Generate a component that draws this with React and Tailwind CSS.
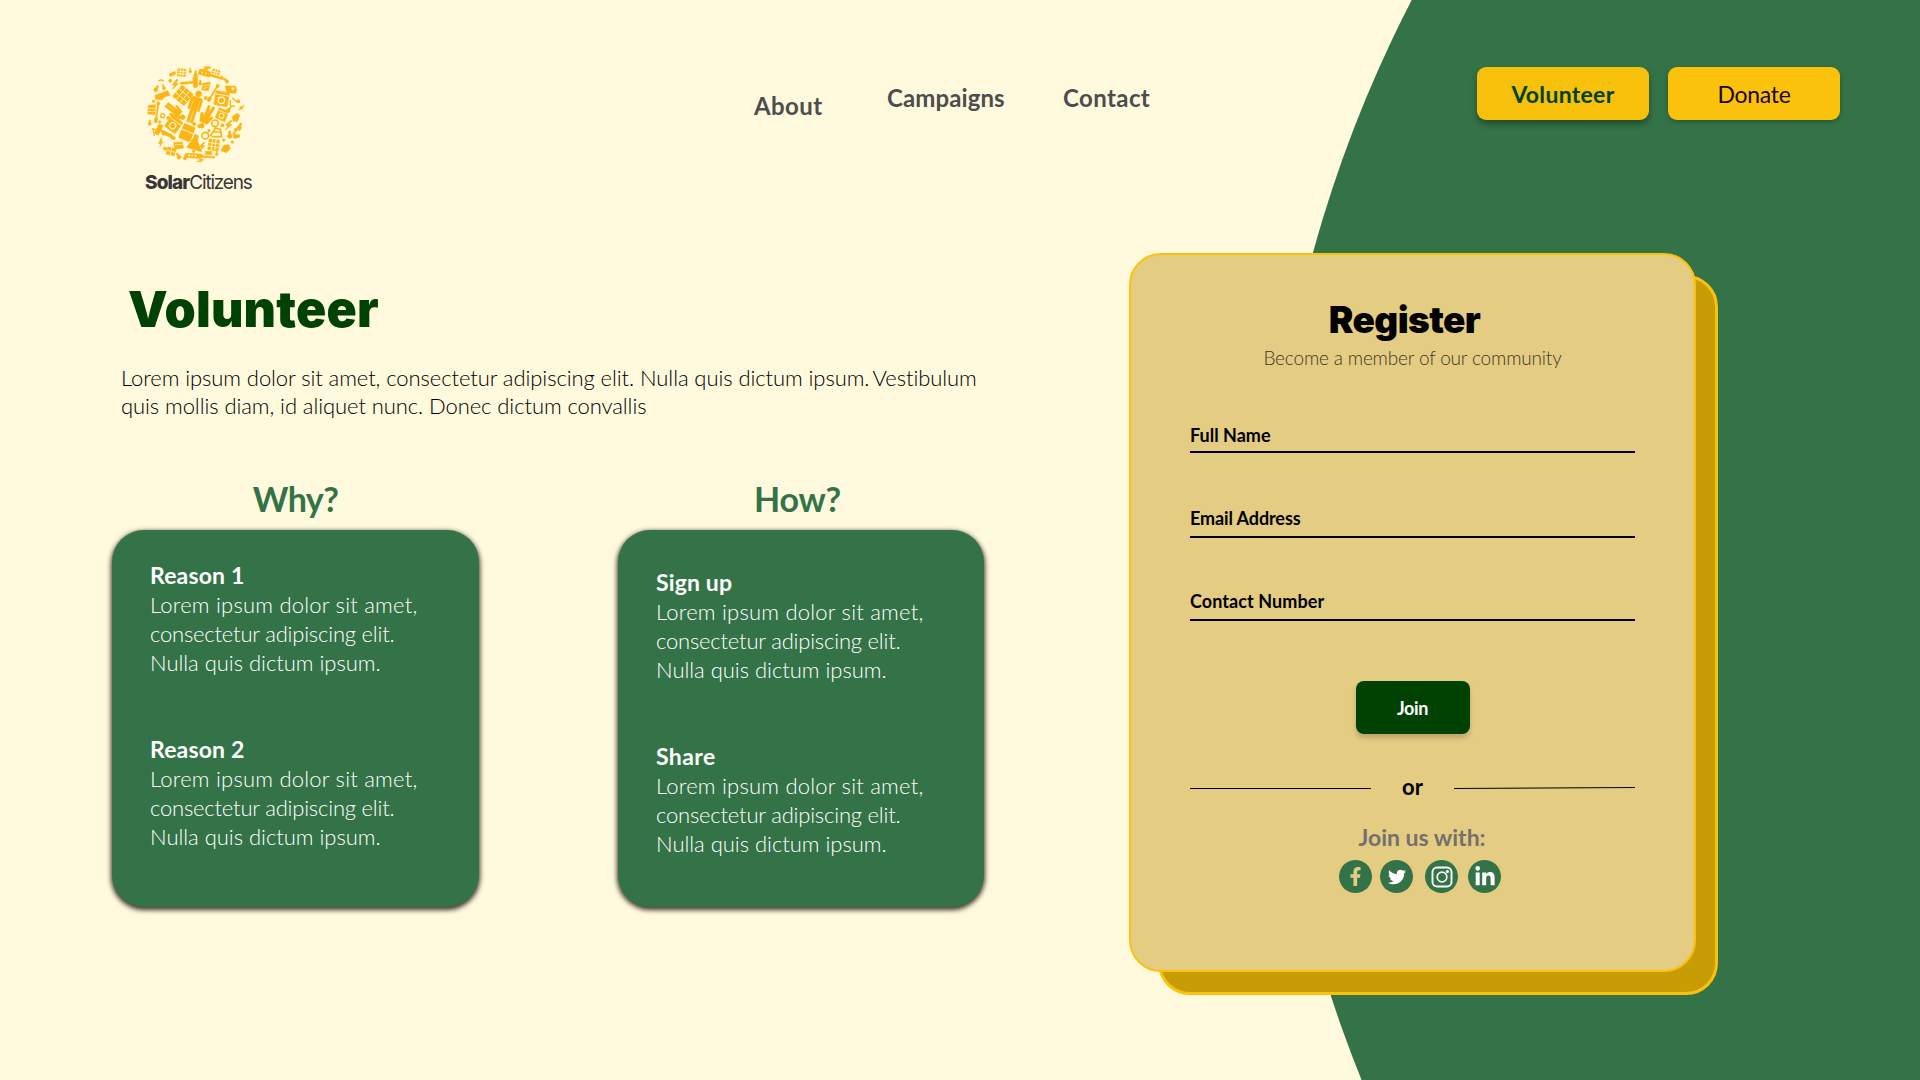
import React from "react";
import { FaFacebookF, FaTwitter, FaLinkedinIn } from "react-icons/fa";

const S = "#FFFADD";

function Panel({ x, y, w, h, r, n = 3 }) {
  const lines = [];
  for (let i = 1; i < n; i++) {
    lines.push(<path key={i} d={`M${-w / 2 + (w * i) / n} ${-h / 2}V${h / 2}M${-w / 2} ${-h / 2 + (h * i) / n}H${w / 2}`} />);
  }
  return (
    <g transform={`translate(${x} ${y}) rotate(${r})`}>
      <rect x={-w / 2} y={-h / 2} width={w} height={h} rx="2" />
      <g stroke={S} strokeWidth="2.4">{lines}</g>
    </g>
  );
}

function Washer({ x, y, s, r }) {
  return (
    <g transform={`translate(${x} ${y}) rotate(${r}) scale(${s})`}>
      <rect x="-20" y="-21" width="40" height="42" rx="3" />
      <path d="M-20 -11H20" stroke={S} strokeWidth="2.5" />
      <circle cx="0" cy="5" r="9.5" fill="none" stroke={S} strokeWidth="3.5" />
    </g>
  );
}

function Bolt({ x, y, r = 0, s = 1 }) {
  return <path transform={`translate(${x} ${y}) rotate(${r}) scale(${s})`} d="M2 -15L-8 2H-1L-5 15L9 -4H2L7 -15Z" />;
}

function Bulb({ x, y, r = 0, s = 1 }) {
  return (
    <g transform={`translate(${x} ${y}) rotate(${r}) scale(${s})`}>
      <circle cx="0" cy="4" r="6" />
      <rect x="-2.5" y="-10" width="5" height="12" />
    </g>
  );
}

function Tool({ x, y, r = 0, l = 40 }) {
  return (
    <g transform={`translate(${x} ${y}) rotate(${r})`}>
      <rect x="-2" y={-l / 2} width="4" height={l} rx="2" />
      <circle cx="0" cy={-l / 2} r="5" />
      <rect x="-4.5" y={l / 2 - 12} width="9" height="14" rx="3" />
    </g>
  );
}

function Hammer({ x, y, r = 0 }) {
  return (
    <g transform={`translate(${x} ${y}) rotate(${r})`}>
      <rect x="-3" y="-16" width="6" height="46" rx="2" />
      <path d="M-16 -22H12L16 -17V-9H-16Z" />
    </g>
  );
}

function Sun() {
  return (
    <svg viewBox="0 0 300 300" className="block size-[100px]" fill="#FDB515" stroke="#FDB515" strokeWidth="1.6" aria-hidden="true">
      <Panel x={114} y={94} w={44} h={44} r={40} />
      <Panel x={110} y={26} w={25} h={22} r={5} />
      <Panel x={212} y={28} w={22} h={22} r={18} />
      <Panel x={206} y={243} w={32} h={32} r={8} />
      <Panel x={78} y={262} w={26} h={22} r={12} n={2} />
      <Washer x={230} y={104} s={1.02} r={10} />
      <Washer x={86} y={181} s={0.98} r={36} />
      <Washer x={231} y={152} s={0.78} r={22} />
      <g transform="rotate(18 150 130)">
        <circle cx="148" cy="88" r="9" />
        <path d="M137 99H160Q166 100 166 107V139H160V110H158V178H150V142H147V178H139V110H137V139H130V107Q131 100 137 99Z" />
      </g>
      <g transform="rotate(-52 88 140)">
        <circle cx="88" cy="172" r="7" />
        <path d="M76 160H100L106 136L101 134L96 148V110H89V136H87V110H80V148L74 134L69 137Z" />
      </g>
      <g transform="rotate(26 182 162)">
        <circle cx="182" cy="188" r="7" />
        <path d="M170 178H194L202 152L196 150L190 160L194 124H186L183 148L179 124H172L175 160L167 150L162 154Z" />
      </g>
      <Hammer x={136} y={56} r={86} />
      <Hammer x={55} y={203} r={-64} />
      <g transform="translate(126 206) rotate(22)">
        <rect x="-18" y="-23" width="36" height="46" rx="3" />
        <path d="M-18 -4H18" stroke={S} strokeWidth="2.5" />
      </g>
      <path d="M125 250L145 222L150 210L160 215L158 232L170 264L150 258Z" />
      <g transform="translate(201 40) rotate(16)">
        <rect x="-42" y="-7" width="84" height="5" rx="2" />
        <path d="M-42 -14H-8V2H-42Z" />
        <circle cx="-32" cy="-6" r="3" fill={S} />
        <circle cx="-20" cy="-6" r="3" fill={S} />
      </g>
      <g transform="translate(165 277) rotate(3)">
        <rect x="-44" y="-7" width="50" height="13" rx="3" />
        <rect x="0" y="-2" width="44" height="5" />
        <path d="M-36 -1H-6" stroke={S} strokeWidth="4" strokeDasharray="6 4" />
      </g>
      <g fill="none" stroke="#FDB515" strokeWidth="5">
        <circle cx="181" cy="215" r="10" />
        <circle cx="210" cy="178" r="10" />
        <path d="M196 216L212 192L226 196L230 218H200M206 204H230" />
        <circle cx="53" cy="155" r="6" strokeWidth="4" />
        <path d="M256 108V126M256 126H270M262 102L276 114" strokeWidth="4" />
        <path d="M40 52Q50 44 56 52" strokeWidth="4" />
        <path d="M24 192L28 216M20 196H32" strokeWidth="4" />
      </g>
      <path d="M30 94L68 80L76 94L60 98L50 108L32 106Z" />
      <path d="M10 124L32 122L30 152L8 150Z" />
      <path d="M8 133H32M8 142H32" stroke={S} strokeWidth="2" />
      <path d="M240 66H270Q278 74 272 88L246 86Z" />
      <circle cx="264" cy="74" r="5" fill={S} />
      <path d="M174 58L196 54L190 80L170 78Z" />
      <path d="M176 66L192 62M174 73L190 70" stroke={S} strokeWidth="2" />
      <path d="M262 158L276 148L284 154L278 172L264 172Z" />
      <path d="M236 244L252 242L256 254L244 266L228 260Z" />
      <path d="M86 236L112 234L116 252L90 256Z" />
      <path d="M90 243L112 241" stroke={S} strokeWidth="2" />
      <path d="M180 262H200V272H182Z" />
      <path d="M72 30L90 22L92 30L76 38Z" />
      <Tool x={204} y={88} r={32} l={52} />
      <Tool x={36} y={146} r={8} l={56} />
      <Tool x={72} y={216} r={-66} l={36} />
      <Bolt x={182} y={14} r={60} s={0.95} />
      <Bolt x={90} y={62} r={8} s={1.05} />
      <Bolt x={47} y={236} r={-6} s={0.85} />
      <Bolt x={250} y={184} r={14} s={1.05} />
      <Bolt x={171} y={248} r={8} s={0.9} />
      <Bolt x={288} y={132} r={40} s={0.7} />
      <Bolt x={165} y={290} r={60} s={0.7} />
      <Bulb x={152} y={30} s={0.95} />
      <Bulb x={136} y={20} s={0.7} />
      <Bulb x={34} y={74} r={30} />
      <Bulb x={56} y={70} r={-20} s={0.8} />
      <Bulb x={166} y={56} s={0.8} />
      <Bulb x={244} y={50} r={-40} s={0.8} />
      <Bulb x={254} y={212} s={1.1} />
      <Bulb x={284} y={188} r={20} s={1.1} />
      <Bulb x={270} y={214} r={-20} />
      <Bulb x={100} y={276} r={-30} />
      <Bulb x={120} y={280} r={10} s={0.8} />
      <Bulb x={252} y={136} r={40} s={0.9} />
      <Bulb x={14} y={176} s={0.8} />
      <Bulb x={166} y={184} r={50} s={0.9} />
      <Bulb x={215} y={268} s={0.7} />
      <g>
        <circle cx="76" cy="50" r="5" /><circle cx="182" cy="102" r="5" /><circle cx="70" cy="162" r="5" />
        <circle cx="230" cy="40" r="4" /><circle cx="272" cy="198" r="5" /><circle cx="60" cy="254" r="5" />
        <circle cx="236" cy="228" r="4" /><circle cx="148" cy="180" r="5" /><circle cx="280" cy="112" r="5" />
        <circle cx="44" cy="174" r="4" /><circle cx="104" cy="160" r="5" /><circle cx="280" cy="216" r="5" />
        <circle cx="262" cy="234" r="4" /><circle cx="146" cy="262" r="4" /><circle cx="205" cy="132" r="4" />
        <circle cx="26" cy="112" r="4" /><circle cx="232" cy="184" r="5" /><circle cx="192" cy="200" r="4" />
      </g>
    </svg>
  );
}

function Reason({ title, titleClass }) {
  return (
    <div className="text-[22px] leading-[29px] font-light whitespace-nowrap text-white">
      <h3 className={`text-[23px] leading-[29px] font-bold ${titleClass}`}>{title}</h3>
      <p className="tracking-[0.22px]">Lorem ipsum dolor sit amet,</p>
      <p className="tracking-[-0.2px]">consectetur adipiscing elit.</p>
      <p className="tracking-[-0.03px]">Nulla quis dictum ipsum.</p>
    </div>
  );
}

function Field({ label, className, labelClass }) {
  return (
    <div className={`border-b-2 border-black ${className}`}>
      <label className={`block text-[18px] leading-[25px] font-bold whitespace-nowrap text-black ${labelClass}`}>{label}</label>
    </div>
  );
}

function Social({ children, className }) {
  return <span className={`flex size-[33px] items-center justify-center rounded-full bg-[#337347] text-white ${className}`}>{children}</span>;
}

export default function App() {
  return (
    <div className="relative h-[1080px] w-[1920px] overflow-hidden bg-[#FFFADD] font-['Lato',sans-serif]">
      <div className="absolute top-[-699px] left-[1267px] size-[2587px] rounded-full bg-[#337347]" />

      <header className="relative flex h-[200px] items-start">
        <div className="ml-[145px] w-[120px] pt-16">
          <Sun />
          <div className="mt-[7px] text-[19px] leading-[24px] whitespace-nowrap text-[#3A3536] font-['Inter',sans-serif]">
            <span className="font-extrabold tracking-[-0.9px]">Solar</span>
            <span className="tracking-[-1.2px]">Citizens</span>
          </div>
        </div>
        <nav className="ml-[489px] flex text-[24px] leading-7 font-bold text-[#4D4D4D]">
          <a className="mt-[92px] w-[133px] tracking-[0.4px]">About</a>
          <a className="mt-[84px] w-[176px] tracking-[0.1px]">Campaigns</a>
          <a className="mt-[84px] tracking-[0.4px]">Contact</a>
        </nav>
        <div className="mt-[67px] mr-20 ml-auto flex gap-[19px] text-[23px]">
          <button className="h-[53px] w-[172px] rounded-[9px] bg-[#F6C00B] pt-px font-bold tracking-[0.3px] text-[#004204] shadow-[0_4px_6px_rgba(0,0,0,0.35)]">Volunteer</button>
          <button className="h-[53px] w-[172px] rounded-[9px] bg-[#FAC20B] pt-px tracking-[-0.3px] text-[#1F0500] shadow-[0_2px_5px_rgba(0,0,0,0.25)]">Donate</button>
        </div>
      </header>

      <main className="relative flex items-start">
        <section className="ml-28 w-[1017px]">
          <h1 className="mt-[79px] pl-4 text-[50px] leading-[60px] font-black tracking-[0.2px] text-[#004204] font-['Inter',sans-serif]">Volunteer</h1>
          <p className="mt-[25px] pl-[9px] text-[22px] leading-7 font-light tracking-[-0.08px] whitespace-nowrap text-black">
            Lorem ipsum dolor sit amet, consectetur adipiscing elit. Nulla quis dictum ipsum.<span className="ml-[-2px]"> Vestibulum</span>
            <br />
            quis mollis diam, id aliquet nunc. Donec dictum convallis
          </p>
          <div className="mt-[59px] flex gap-[139px]">
            <div className="w-[367px]">
              <h2 className="text-center text-[34px] leading-10 font-bold tracking-[-0.6px] text-[#337347]">Why?</h2>
              <div className="mt-[11px] flex h-[377px] flex-col gap-[58px] rounded-[32px] bg-[#337347] px-[38px] pt-[31px] shadow-[0_2px_5px_1px_rgba(30,20,15,0.85)]">
                <Reason title="Reason 1" titleClass="tracking-[0.16px]" />
                <Reason title="Reason 2" titleClass="tracking-[0.16px]" />
              </div>
            </div>
            <div className="w-[366px]">
              <h2 className="mr-[7px] text-center text-[34px] leading-10 font-bold tracking-[-0.2px] text-[#337347]">How?</h2>
              <div className="mt-[11px] flex h-[377px] flex-col gap-[58px] rounded-[32px] bg-[#337347] px-[38px] pt-[38px] shadow-[0_2px_5px_1px_rgba(30,20,15,0.85)]">
                <Reason title="Sign up" titleClass="tracking-[0.15px]" />
                <Reason title="Share" titleClass="tracking-[0.4px]" />
              </div>
            </div>
          </div>
        </section>

        <section className="relative mt-[53px] h-[719px] w-[567px]">
          <div className="absolute top-[22px] left-[29px] h-[720px] w-[560px] rounded-[32px] border-3 border-[#FAC20B] bg-[#C89C05]" />
          <div className="relative h-full rounded-[32px] border-2 border-[#FAC20B] bg-[#E4CC83] px-[59px] pt-[43px]">
            <h2 className="mr-4 text-center text-[37px] leading-[44px] font-black tracking-[-0.6px] text-black font-['Inter',sans-serif]">Register</h2>
            <p className="mt-1 text-center text-[19px] leading-6 font-light tracking-[-0.17px] text-[#3D3828]">Become a member of our community</p>
            <Field label="Full Name" className="mt-[53px] h-[30px]" labelClass="" />
            <Field label="Email Address" className="mt-[53px] h-[32px]" labelClass="tracking-[-0.1px]" />
            <Field label="Contact Number" className="mt-[51px] h-[32px]" labelClass="tracking-[0.08px]" />
            <button className="mx-auto mt-[60px] block h-[53px] w-[114px] rounded-lg bg-[#004204] pt-px text-[18px] font-bold tracking-[-0.4px] text-white shadow-[0_4px_5px_rgba(0,0,0,0.18)]">Join</button>
            <div className="mt-[39px] flex h-7 items-center justify-between">
              <svg className="h-[3px] w-[181px]" viewBox="0 0 181 3"><path d="M0 2.5H181" stroke="#000" /></svg>
              <span className="text-[22px] leading-7 font-bold text-black">or</span>
              <svg className="h-[3px] w-[181px]" viewBox="0 0 181 3"><path d="M0 2.5L181 1.5" stroke="#000" /></svg>
            </div>
            <p className="mt-[22px] ml-[19px] text-center text-[23px] leading-7 font-bold text-[#74706C]">Join us with:</p>
            <div className="mt-[9px] ml-[149px] flex">
              <Social className=""><FaFacebookF size={19} color="#E4CC83" /></Social>
              <Social className="ml-2"><FaTwitter size={18} /></Social>
              <Social className="ml-3">
                <svg viewBox="0 0 22 22" className="size-[22px]" fill="none" stroke="#fff">
                  <rect x="1.5" y="1.5" width="19" height="19" rx="4.5" strokeWidth="1.9" />
                  <circle cx="11" cy="11" r="4.8" strokeWidth="1.7" />
                  <circle cx="16.4" cy="5.6" r="1.6" fill="#fff" stroke="none" />
                </svg>
              </Social>
              <Social className="ml-[10px]"><FaLinkedinIn size={22} /></Social>
            </div>
          </div>
        </section>
      </main>
    </div>
  );
}
